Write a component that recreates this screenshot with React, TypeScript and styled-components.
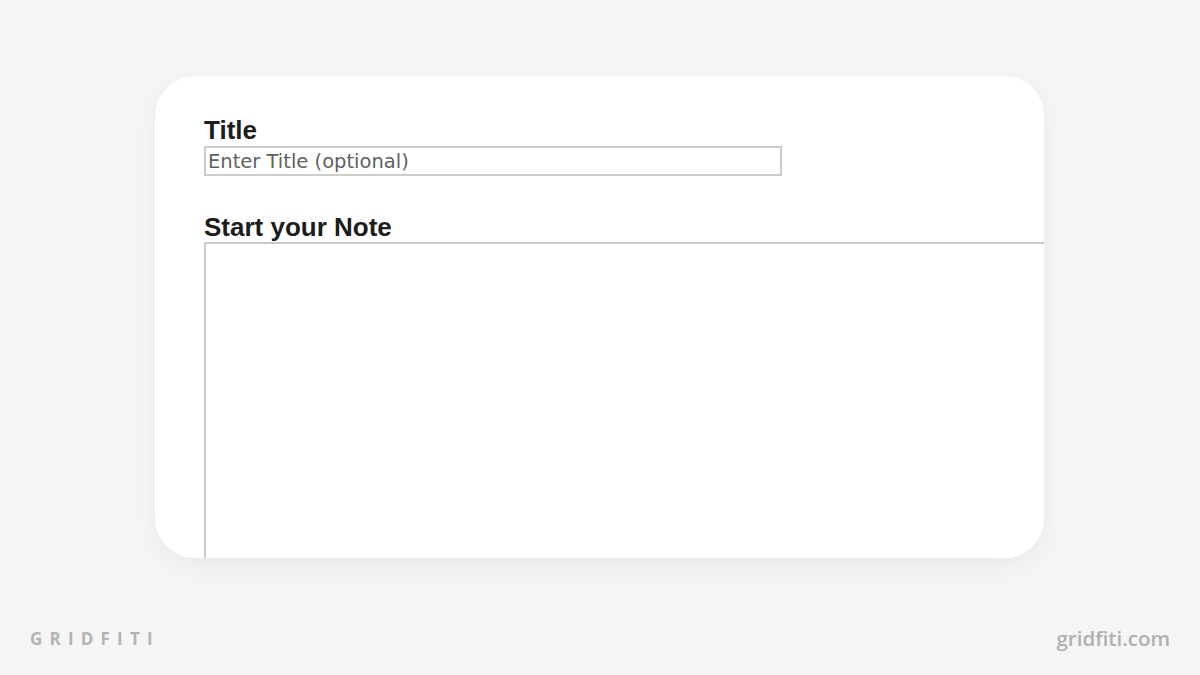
import React from "react";
import styled, { createGlobalStyle } from "styled-components";

const Global = createGlobalStyle`
  html, body { margin: 0; padding: 0; background: #f5f5f5; }
  #root { width: 1200px; height: 675px; }
`;

const Page = styled.div`
  width: 1200px;
  height: 675px;
  background: #f5f5f5;
  display: flex;
  flex-direction: column;
  overflow: hidden;
`;

const Card = styled.div`
  flex: none;
  margin: 76px 0 0 155px;
  width: 889px;
  height: 482px;
  box-sizing: border-box;
  padding: 39px 0 0 49px;
  background: #ffffff;
  border-radius: 40px;
  overflow: hidden;
  box-shadow: 0 8px 28px rgba(0, 0, 0, 0.05);
  display: flex;
  flex-direction: column;
  align-items: flex-start;
`;

const Label = styled.label<{ $gap?: number }>`
  flex: none;
  display: block;
  font-family: "Liberation Sans", Arial, sans-serif;
  font-weight: 700;
  font-size: 26px;
  line-height: 30px;
  color: #1c1c1c;
  margin-top: ${(p) => p.$gap ?? 0}px;
`;

const TitleInput = styled.input`
  flex: none;
  margin: 1px 0 0 0;
  width: 578px;
  height: 30px;
  box-sizing: border-box;
  border: 2px solid #cdcdc8;
  padding: 0 2px;
  font-family: "DejaVu Sans", Verdana, sans-serif;
  font-size: 19.5px;
  color: #333;
  background: #fff;
  outline: none;
  &::placeholder { color: #5f5f5f; }
`;

const NoteArea = styled.textarea`
  flex: none;
  width: 1000px;
  height: 400px;
  box-sizing: border-box;
  border: 2px solid #cbcbc5;
  margin: 0;
  padding: 4px;
  resize: none;
  outline: none;
  background: #fff;
  font-family: "DejaVu Sans", sans-serif;
  font-size: 16px;
`;

const Footer = styled.div`
  flex: none;
  display: flex;
  justify-content: space-between;
  align-items: center;
  padding: 0 30px 0 30px;
  margin-top: 67px;
  height: 26px;
`;

const Brand = styled.div`
  font-family: "Open Sans", sans-serif;
  font-weight: 700;
  font-size: 17px;
  letter-spacing: 7.2px;
  color: #b3b3b3;
`;

const Site = styled.div`
  font-family: "Open Sans", sans-serif;
  font-weight: 600;
  font-size: 20.5px;
  color: #b0b0b0;
`;

export default function App() {
  return (
    <>
      <Global />
      <Page>
        <Card>
          <Label>Title</Label>
          <TitleInput placeholder="Enter Title (optional)" />
          <Label $gap={36}>Start your Note</Label>
          <NoteArea />
        </Card>
        <Footer>
          <Brand>GRIDFITI</Brand>
          <Site>gridfiti.com</Site>
        </Footer>
      </Page>
    </>
  );
}
